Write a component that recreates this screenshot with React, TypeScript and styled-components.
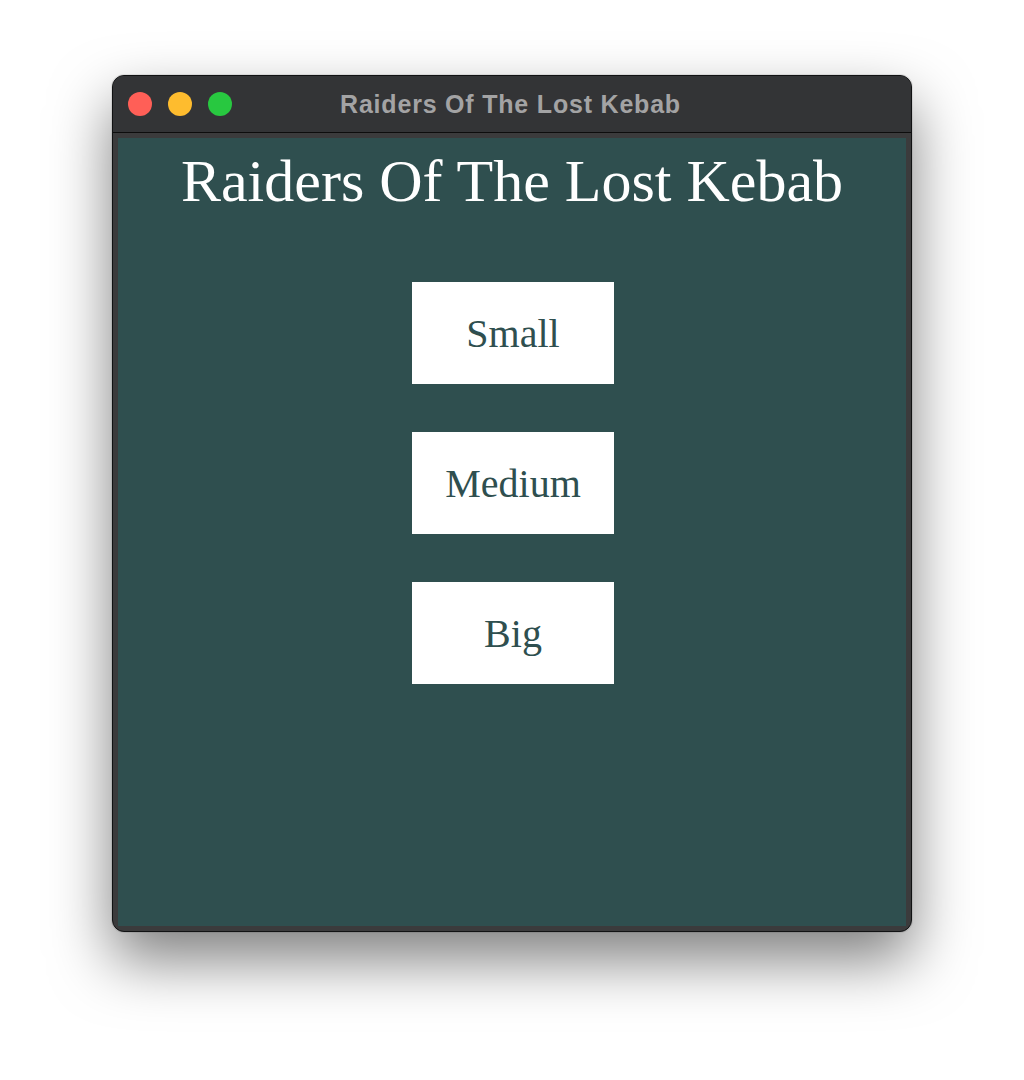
import React from "react";
import styled, { createGlobalStyle } from "styled-components";

const Global = createGlobalStyle`
  html, body { margin: 0; padding: 0; background: #ffffff; }
  body { font-family: "Liberation Serif", "Times New Roman", serif; }
`;

const Page = styled.div`
  width: 1024px;
  height: 1080px;
  box-sizing: border-box;
  padding: 75px 0 0 112px;
  background: #ffffff;
`;

const Window = styled.div`
  width: 800px;
  height: 857px;
  box-sizing: border-box;
  border: 1px solid #111213;
  border-radius: 12px;
  overflow: hidden;
  background: #3b3b3c;
  display: flex;
  flex-direction: column;
  box-shadow: 0 28px 60px rgba(0, 0, 0, 0.5), 0 0 0 1px rgba(0, 0, 0, 0.08);
`;

const TitleBar = styled.div`
  height: 56px;
  flex: none;
  background: #333436;
  border-bottom: 1px solid #0d0d0d;
  display: flex;
  align-items: center;
  padding-left: 15px;
  position: relative;
`;

const Lights = styled.div`
  display: flex;
  gap: 16px;
`;

const Light = styled.span<{ $c: string }>`
  width: 24px;
  height: 24px;
  border-radius: 50%;
  background: ${(p) => p.$c};
`;

const Title = styled.div`
  position: absolute;
  left: 0;
  right: 0;
  top: 0;
  bottom: 0;
  display: flex;
  align-items: center;
  justify-content: center;
  font-family: "Liberation Sans", Arial, sans-serif;
  font-weight: 700;
  font-size: 25px;
  letter-spacing: 0.8px;
  color: #a3a3a4;
  padding-right: 3px;
`;

const Frame = styled.div`
  flex: 1;
  padding: 5px;
  display: flex;
`;

const Content = styled.div`
  flex: 1;
  background: #2f4f4f;
  display: flex;
  flex-direction: column;
  align-items: center;
`;

const Heading = styled.h1`
  margin: 9px 0 0 0;
  font-family: "Liberation Serif", "Times New Roman", serif;
  font-weight: 400;
  font-size: 60px;
  line-height: 69px;
  color: #ffffff;
`;

const Buttons = styled.div`
  margin-top: 66px;
  margin-left: 2px;
  display: flex;
  flex-direction: column;
  gap: 48px;
`;

const SizeButton = styled.button`
  width: 202px;
  height: 102px;
  border: none;
  background: #ffffff;
  color: #2f4f4f;
  font-family: "Liberation Serif", "Times New Roman", serif;
  font-size: 40px;
  padding: 0;
  cursor: pointer;
`;

export default function App() {
  return (
    <>
      <Global />
      <Page>
        <Window>
          <TitleBar>
            <Lights>
              <Light $c="#ff5f57" />
              <Light $c="#febc2e" />
              <Light $c="#28c840" />
            </Lights>
            <Title>Raiders Of The Lost Kebab</Title>
          </TitleBar>
          <Frame>
            <Content>
              <Heading>Raiders Of The Lost Kebab</Heading>
              <Buttons>
                <SizeButton>Small</SizeButton>
                <SizeButton>Medium</SizeButton>
                <SizeButton>Big</SizeButton>
              </Buttons>
            </Content>
          </Frame>
        </Window>
      </Page>
    </>
  );
}
